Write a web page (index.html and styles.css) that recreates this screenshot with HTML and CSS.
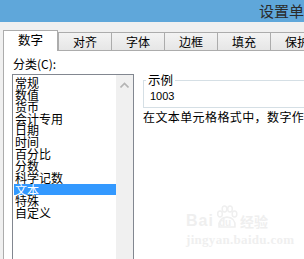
FILE: index.html
```html
<!DOCTYPE html>
<html lang="zh-CN">
<head>
<meta charset="utf-8">
<title>设置单元格格式</title>
<link rel="stylesheet" href="styles.css">
</head>
<body>
<div class="titlebar"><span class="title">设置单元格格式</span></div>
<div class="dialog">
  <div class="tabs">
    <div class="tab active">数字</div>
    <div class="tab">对齐</div>
    <div class="tab">字体</div>
    <div class="tab">边框</div>
    <div class="tab">填充</div>
    <div class="tab">保护</div>
  </div>
  <div class="panel">
    <div class="left">
      <div class="label">分类(<u>C</u>):</div>
      <div class="listbox">
        <ul class="items">
          <li>常规</li>
          <li>数值</li>
          <li>货币</li>
          <li>会计专用</li>
          <li>日期</li>
          <li>时间</li>
          <li>百分比</li>
          <li>分数</li>
          <li>科学记数</li>
          <li class="selected">文本</li>
          <li>特殊</li>
          <li>自定义</li>
        </ul>
        <div class="scroll">
          <svg class="arrow" width="9" height="6" viewBox="0 0 9 6"><path d="M0.5 5.5 L4.5 1.5 L8.5 5.5" fill="none" stroke="#b4b4b4" stroke-width="1.6"/></svg>
        </div>
      </div>
    </div>
    <div class="right">
      <fieldset class="sample">
        <legend>示例</legend>
        <div class="value">1003</div>
      </fieldset>
      <p class="desc">在文本单元格格式中，数字作为文本处理。单元格中显示的内容与输入的内容完全一致。</p>
    </div>
    <div class="watermark">
      <div class="wm-top">
        <span class="wm-bai">Bai</span>
        <span class="wm-paw">
          <svg width="22" height="24" viewBox="0 0 22 24"><g fill="none" stroke="#efefef" stroke-width="1.5"><ellipse cx="4" cy="9" rx="2.3" ry="3"/><ellipse cx="8.5" cy="4" rx="2.3" ry="3"/><ellipse cx="14" cy="4" rx="2.3" ry="3"/><ellipse cx="18.5" cy="9" rx="2.3" ry="3"/><path d="M3 22 Q2 13 11 12 Q20 13 19 22 Z"/></g></svg>
          <span class="wm-du">du</span>
        </span>
        <span class="wm-jy">经验</span>
      </div>
      <div class="wm-url">jingyan.baidu.com</div>
    </div>
  </div>
</div>
</body>
</html>
```

FILE: styles.css
```css
* { box-sizing: border-box; }
html, body {
  margin: 0;
  padding: 0;
}
body {
  width: 304px;
  height: 259px;
  overflow: hidden;
  background: #f0f0f0;
  font-family: "Noto Sans CJK SC", "Noto Sans", sans-serif;
  font-size: 12px;
  color: #000;
}
.titlebar {
  height: 22px;
  background: #5fa7da;
  padding-left: 259px;
  white-space: nowrap;
  overflow: hidden;
}
.title {
  font-size: 15px;
  line-height: 21px;
  color: #2b2b2b;
}
.dialog {
  padding: 8px 0 0 3px;
}
.tabs {
  display: flex;
  align-items: flex-end;
  height: 20px;
  white-space: nowrap;
}
.tab {
  flex: 0 0 auto;
  height: 18px;
  padding: 0 14px;
  margin-left: -1px;
  border: 1px solid #acacac;
  border-bottom: none;
  background: linear-gradient(#f3f3f3, #e6e6e6);
  font-size: 12px;
  line-height: 17px;
  text-align: center;
}
.tab:first-child { margin-left: 0; }
.tab.active {
  position: relative;
  z-index: 1;
  height: 21px;
  margin-bottom: -1px;
  width: 55px;
  background: #fff;
  font-size: 12.5px;
  line-height: 18px;
}
.tab.active + .tab { margin-left: 0; }
.panel {
  position: relative;
  display: flex;
  background: #fff;
  border-left: 1px solid #acacac;
  border-top: 1px solid #acacac;
  height: 300px;
}
.left {
  flex: 0 0 auto;
  padding-left: 8px;
}
.label {
  margin-top: 5px;
  line-height: 16px;
  padding-left: 1px;
}
.label u { text-decoration: none; }
.listbox {
  margin-top: 2px;
  width: 122px;
  height: 200px;
  border: 1px solid #828790;
  display: flex;
}
.items {
  list-style: none;
  margin: 0;
  padding: 2px 0 0 1px;
  flex: 1 1 auto;
}
.items li {
  height: 11.85px;
  line-height: 12px;
  padding-left: 1px;
  white-space: nowrap;
}
.items li.selected {
  background: #3399ff;
  color: #fff;
}
.scroll {
  flex: 0 0 17px;
  background: #f0f0f0;
  display: flex;
  justify-content: center;
  padding-top: 7px;
}
.arrow { display: block; }
.right {
  flex: 1 1 auto;
  margin-left: 9px;
  padding-top: 22px;
  min-width: 0;
}
.sample {
  margin: 0;
  padding: 0 0 4px 2px;
  border: 1px solid #d5dfe5;
  border-right: none;
  width: 200px;
}
.sample legend {
  padding: 0 2px;
  font-size: 12.5px;
  line-height: 14px;
}
.value {
  margin-left: 4px;
  font-family: "Liberation Sans", Arial, sans-serif;
  font-size: 11px;
  line-height: 14px;
  margin-top: 2px;
}
.desc {
  margin: 1px 0 0 0;
  line-height: 16px;
  white-space: nowrap;
  letter-spacing: 0.4px;
}
.watermark {
  position: absolute;
  left: 182px;
  top: 154px;
  color: #efefef;
  pointer-events: none;
}
.wm-top {
  display: flex;
  align-items: flex-end;
  height: 24px;
}
.wm-bai {
  font-family: "Liberation Sans", sans-serif;
  font-weight: bold;
  font-size: 16px;
  line-height: 16px;
  letter-spacing: 1px;
}
.wm-paw {
  position: relative;
  width: 22px;
  height: 24px;
  margin-left: 2px;
}
.wm-paw svg { display: block; }
.wm-du {
  position: absolute;
  left: 3px;
  bottom: 1px;
  font-family: "Liberation Sans", sans-serif;
  font-weight: bold;
  font-size: 10px;
  line-height: 10px;
}
.wm-jy {
  font-size: 14px;
  line-height: 16px;
  font-weight: bold;
  margin-left: 2px;
}
.wm-url {
  margin-top: 5px;
  font-family: "Liberation Serif", serif;
  font-weight: bold;
  font-size: 13px;
  line-height: 12px;
  letter-spacing: 0.3px;
}
```
